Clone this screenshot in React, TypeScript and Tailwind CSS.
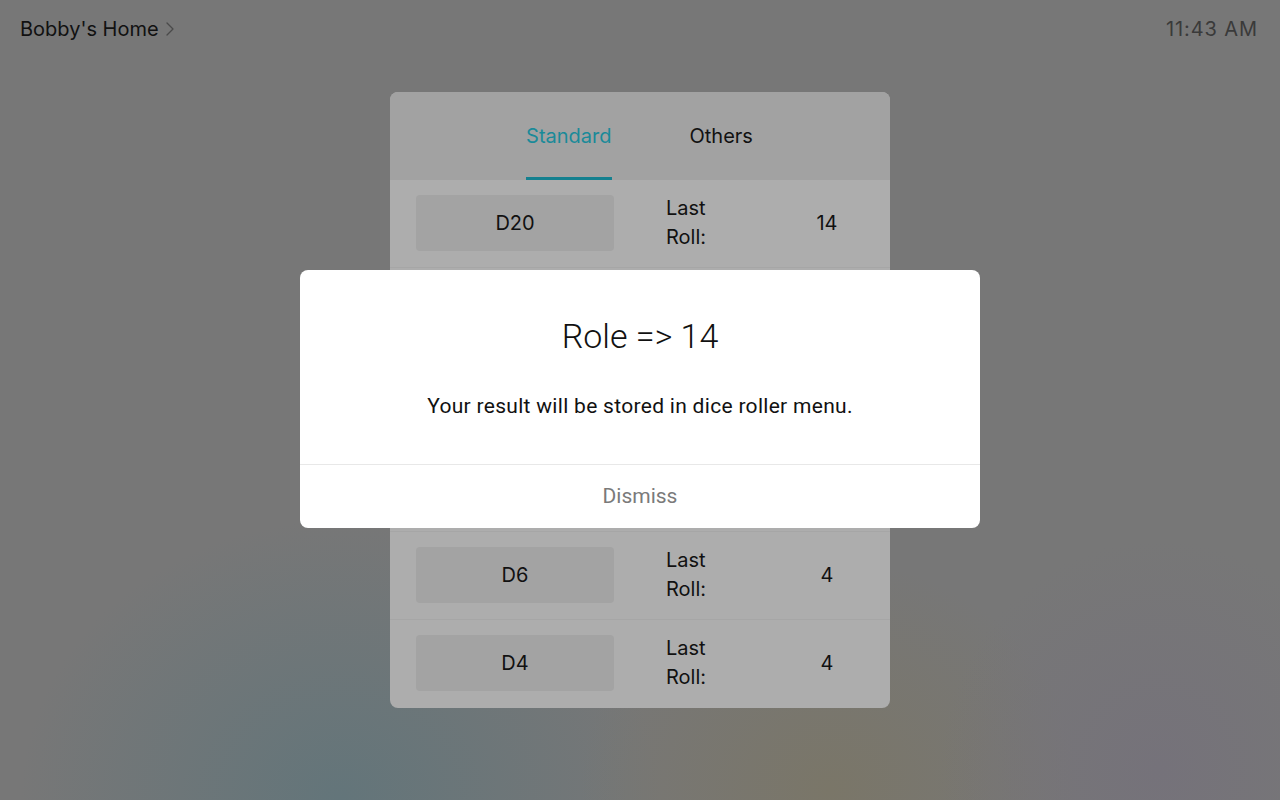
import { ChevronRight } from 'lucide-react'

const dice = [
  { name: 'D20', last: 14 },
  { name: 'D12', last: 7 },
  { name: 'D10', last: 3 },
  { name: 'D8', last: 5 },
  { name: 'D6', last: 4 },
  { name: 'D4', last: 4 },
]

function DiceRow({ name, last }: { name: string; last: number }) {
  return (
    <div className="flex items-center h-[88px] border-b border-[#a6a6a6] last:border-b-0 pl-[26px] pb-[2px]">
      <div className="w-[198px] h-[56px] rounded bg-[#a3a3a3] flex items-center justify-center text-[20px] text-[#111]">
        {name}
      </div>
      <div className="ml-[52px] w-[60px] text-[20px] leading-[29px] text-[#111]">Last Roll:</div>
      <div className="ml-[89px] w-[24px] text-center text-[20px] text-[#111]">{last}</div>
    </div>
  )
}

export default function App() {
  return (
    <div
      className="relative w-[1280px] h-[800px] overflow-hidden bg-[#777777] font-['Inter','Liberation_Sans',sans-serif]"
    >
      {/* soft background glows */}
      <div className="absolute left-[20px] top-[520px] w-[640px] h-[560px] rounded-full bg-[radial-gradient(closest-side,#63757a,transparent)]" />
      <div className="absolute left-[580px] top-[560px] w-[500px] h-[460px] rounded-full bg-[radial-gradient(closest-side,#7a7668,transparent)]" />
      <div className="absolute left-[940px] top-[540px] w-[440px] h-[460px] rounded-full bg-[radial-gradient(closest-side,#75727a,transparent)]" />

      <div className="relative flex flex-col h-full">
        <div className="flex items-center justify-between h-[58px] px-[20px]">
          <div className="flex items-center text-[20px] text-[#111]">
            Bobby's Home
            <ChevronRight className="w-[24px] h-[24px] ml-[-1px] text-[#4a4a4a]" strokeWidth={1.3} />
          </div>
          <div className="text-[20px] tracking-[0.9px] text-[#3a3a3a] pr-[2px]">11:43 AM</div>
        </div>

        <div className="flex justify-center mt-[34px]">
          <div className="w-[500px] rounded-lg overflow-hidden bg-[#adadad]">
            <div className="h-[88px] bg-[#a2a2a2] flex justify-center items-end">
              <div className="flex gap-[78px] ml-[-1px]">
                <div className="h-[88px] flex flex-col justify-end">
                  <div className="text-[20px] text-[#1a8a99] pb-[26px]">Standard</div>
                  <div className="h-[3px] bg-[#14808f]" />
                </div>
                <div className="h-[88px] flex flex-col justify-end">
                  <div className="text-[20px] text-[#111] pb-[29px]">Others</div>
                </div>
              </div>
            </div>
            {dice.map((d) => (
              <DiceRow key={d.name} name={d.name} last={d.last} />
            ))}
          </div>
        </div>
      </div>

      <div className="absolute left-[300px] top-[270px] w-[680px] h-[258px] bg-white rounded-lg flex flex-col font-['Roboto',sans-serif]">
        <div className="flex-1 flex flex-col items-center">
          <div className="mt-[42px] text-[34px] leading-[48px] font-light text-[#111]">Role =&gt; 14</div>
          <div className="mt-[33px] text-[21px] leading-[26px] tracking-[0.3px] text-[#111]">
            Your result will be stored in dice roller menu.
          </div>
        </div>
        <div className="h-[64px] border-t border-[#e8e8e8] flex items-center justify-center text-[21px] text-[#7a7a7a]">
          Dismiss
        </div>
      </div>
    </div>
  )
}
